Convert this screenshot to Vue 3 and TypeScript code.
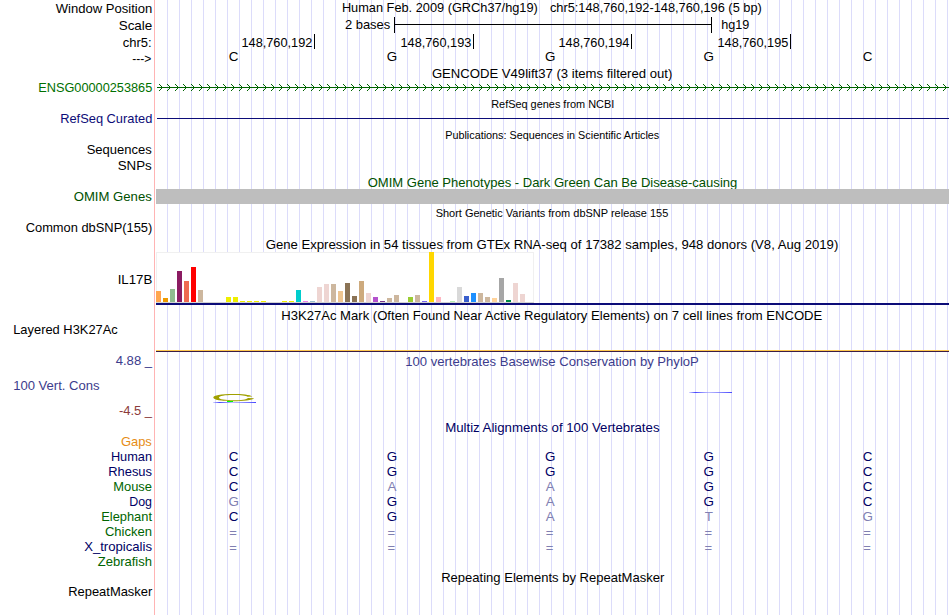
<template>
  <main class="browser">
    <section v-for="row in rows" :key="row.top" class="row">
      <svg class="side" width="154" :height="row.height" :viewBox="`0 ${row.top} 154 ${row.height}`">
        <text
          v-for="l in row.labels"
          :key="l.text"
          :x="l.x"
          :y="l.y"
          :textLength="l.width"
          lengthAdjust="spacingAndGlyphs"
          :class="l.tone"
        >{{ l.text }}</text>
      </svg>

      <svg class="plot" width="794" :height="row.height" :viewBox="`155 ${row.top} 794 ${row.height}`">
        <g v-if="row.kind === 'scale'" class="ink">
          <rect x="394" y="17" width="1" height="16" />
          <rect x="711" y="17" width="1" height="16" />
          <rect x="394" y="24" width="318" height="1" />
        </g>

        <g v-else-if="row.kind === 'ticks'" class="ink">
          <rect v-for="x in ticks" :key="x" :x="x" y="34" width="1" height="15" />
        </g>

        <g v-else-if="row.kind === 'gene'" class="gene">
          <rect x="157" y="87" width="792" height="1" />
          <path v-for="x in arrows" :key="x" :d="`M${x - 3} 84l3.5 3.5l-3.5 3.5`" />
        </g>

        <rect v-else-if="row.kind === 'refseq'" class="navy-fill" x="157" y="118" width="792" height="1" />

        <rect v-else-if="row.kind === 'omim'" class="omim" x="156" y="189" width="793" height="15" />

        <g v-else-if="row.kind === 'gtex'">
          <rect class="gtex-box" x="156.5" y="252.5" width="377" height="50" />
          <rect class="gtex-base" x="156" y="302" width="378" height="1" />
          <template v-for="(b, i) in tissues" :key="i">
            <rect v-if="b[0]" :x="156 + i * 7" :y="302 - b[0]" width="5" :height="b[0]" :fill="b[1]" />
          </template>
          <rect class="navy-fill" x="156" y="303" width="793" height="2" />
        </g>

        <g v-else-if="row.kind === 'h3k27ac'">
          <rect class="mark-top" x="156" y="350" width="793" height="1" />
          <rect class="mark-bottom" x="156" y="351" width="793" height="1" />
        </g>

        <g v-else-if="row.kind === 'conservation'">
          <defs>
            <linearGradient id="fade">
              <stop offset="0" stop-color="#4646ff" stop-opacity="0.2" />
              <stop offset="0.15" stop-color="#4646ff" />
              <stop offset="0.45" stop-color="#8c8cff" stop-opacity="0.6" />
              <stop offset="1" stop-color="#4646ff" />
            </linearGradient>
          </defs>
          <path
            class="logo"
            d="M252.500 396.600C250 394.600 242 394 233 394C221 394 213.300 395.200 213.300 397.600C213.300 400 221 401.200 233 401.200C243 401.200 253 400.300 254 398.200L248 397.900C246.500 399.600 241 400.300 234 400.300C225 400.300 219 399.500 219 397.600C219 395.700 225 394.900 233 394.900C241 394.900 246 395.400 247.500 396.700Z"
          />
          <rect class="logo-green" x="227" y="401" width="6" height="1" />
          <rect x="213" y="402" width="43" height="1" fill="url(#fade)" />
          <rect x="689" y="392" width="43" height="1" fill="url(#fade)" />
        </g>

        <text
          v-for="t in row.titles"
          :key="t.text"
          :x="t.x"
          :y="t.y"
          :textLength="t.width"
          lengthAdjust="spacingAndGlyphs"
          :class="t.tone"
        >{{ t.text }}</text>

        <text
          v-for="(base, i) in row.bases"
          :key="i"
          class="base"
          :class="[baseTone(row, base, i), { gap: base === '=' }]"
          :x="base === '=' ? columns[i] - 0.6 : columns[i]"
          :y="base === '=' ? row.baseY + 1 : row.baseY"
        >{{ base }}</text>
      </svg>
    </section>
  </main>
</template>

<script setup lang="ts">
interface Label {
  text: string
  x: number
  y: number
  width: number
  tone: string
}

interface Row {
  top: number
  height: number
  kind: string
  labels: Label[]
  titles: Label[]
  bases: string
  baseY: number
}

const human = 'CGGGC'
const columns = [233.6, 391.9, 550.2, 708.8, 867.6]
const ticks = [314, 473, 631, 790]
const arrows = Array.from({ length: 99 }, (_, i) => 162 + i * 8)

// left and right are the visible edges of the text
function label(text: string, left: number, right: number, y: number, tone = 'black'): Label {
  return { text, x: left - 0.8, y, width: right - left + 1.1, tone }
}

function row(
  top: number,
  bottom: number,
  labels: Label[],
  titles: Label[] = [],
  kind = '',
  bases = '',
  baseY = 0,
): Row {
  return { top, height: bottom - top, labels, titles, kind, bases, baseY }
}

function species(name: string, left: number, index: number, tone: string, bases = ''): Row {
  const top = 450 + index * 15
  return row(top, top + 15, [label(name, left, 151.7, top + 11, tone)], [], 'species', bases, top + 11)
}

function baseTone(r: Row, base: string, i: number) {
  if (r.kind !== 'species') return 'black'
  return base === human[i] ? 'navy' : 'faded'
}

const rows: Row[] = [
  row(0, 17, [label('Window Position', 56.5, 152, 13)], [
    label('Human Feb. 2009 (GRCh37/hg19)', 342.7, 537.5, 12),
    label('chr5:148,760,192-148,760,196 (5 bp)', 550.7, 761.5, 12),
  ]),
  row(17, 33, [label('Scale', 119.5, 152, 30)], [
    label('2 bases', 345.7, 390, 29),
    label('hg19', 722, 749, 29),
  ], 'scale'),
  row(33, 49, [label('chr5:', 123.5, 151.3, 47)], [
    label('148,760,192', 242.3, 312, 47),
    label('148,760,193', 401.3, 471, 47),
    label('148,760,194', 559.3, 629, 47),
    label('148,760,195', 718.3, 788, 47),
  ], 'ticks'),
  row(49, 66, [label('--->', 133, 151, 63)], [], 'bases', human, 61),
  row(66, 81, [], [label('GENCODE V49lift37 (3 items filtered out)', 432.7, 672, 78)]),
  row(81, 97, [label('ENSG00000253865', 39, 152, 92, 'green')], [], 'gene'),
  row(97, 112, [], [label('RefSeq genes from NCBI', 492, 614, 108, 'small')]),
  row(112, 128, [label('RefSeq Curated', 61, 152, 123, 'navy2')], [], 'refseq'),
  row(128, 143, [], [label('Publications: Sequences in Scientific Articles', 446, 659, 139, 'small')]),
  row(143, 159, [label('Sequences', 87.5, 151.5, 154)]),
  row(159, 175, [label('SNPs', 118.5, 151.5, 170)]),
  row(175, 189, [], [label('OMIM Gene Phenotypes - Dark Green Can Be Disease-causing', 368.5, 737, 187, 'forest')]),
  row(189, 204, [label('OMIM Genes', 74.5, 151.5, 201, 'forest')], [], 'omim'),
  row(204, 220, [], [label('Short Genetic Variants from dbSNP release 155', 436.5, 668, 217, 'small')]),
  row(220, 236, [label('Common dbSNP(155)', 26.5, 152, 232)]),
  row(236, 252, [], [
    label('Gene Expression in 54 tissues from GTEx RNA-seq of 17382 samples, 948 donors (V8, Aug 2019)', 266.5, 838, 249),
  ]),
  row(252, 305, [label('IL17B', 118.5, 152, 284)], [], 'gtex'),
  row(305, 323, [], [
    label('H3K27Ac Mark (Often Found Near Active Regulatory Elements) on 7 cell lines from ENCODE', 282, 822, 320),
  ]),
  row(323, 352, [label('Layered H3K27Ac', 14, 117.5, 334)], [], 'h3k27ac'),
  row(352, 371, [label('4.88 _', 116.5, 151.8, 365, 'indigo')], [
    label('100 vertebrates Basewise Conservation by PhyloP', 406, 698.5, 366, 'indigo'),
  ]),
  row(371, 420, [
    label('100 Vert. Cons', 14, 99.3, 390, 'indigo'),
    label('-4.5 _', 119.7, 151.8, 415, 'maroon'),
  ], [], 'conservation'),
  row(420, 435, [], [label('Multiz Alignments of 100 Vertebrates', 446, 659.2, 432, 'navy')]),
  row(435, 450, [label('Gaps', 121.7, 151.5, 446, 'orange')]),
  species('Human', 111.7, 0, 'navy', 'CGGGC'),
  species('Rhesus', 109, 1, 'navy', 'CGGGC'),
  species('Mouse', 114, 2, 'pine', 'CAAGC'),
  species('Dog', 130, 3, 'navy', 'GGAGC'),
  species('Elephant', 102, 4, 'pine', 'CGATG'),
  species('Chicken', 105.7, 5, 'pine', '====='),
  species('X_tropicalis', 85, 6, 'navy', '====='),
  species('Zebrafish', 98.5, 7, 'pine'),
  row(570, 585, [], [label('Repeating Elements by RepeatMasker', 442, 664, 582)]),
  row(585, 615, [label('RepeatMasker', 69, 152, 596)]),
]

// bar height and colour per GTEx tissue
const tissues: [number, string][] = [
  [11, '#ffa54f'], [4, '#ee9a00'], [13, '#8fbc8f'], [31, '#8b1c62'], [21, '#ee6a50'], [35, '#ff0000'],
  [12, '#cdb79e'], [0, ''], [0, ''], [0, ''], [5, '#eeee00'], [5, '#eeee00'],
  [1, '#eeee00'], [1, '#eeee00'], [1, '#eeee00'], [1, '#eeee00'], [0, ''], [0, ''],
  [1, '#eeee00'], [1, '#eeee00'], [12, '#00cdcd'], [1, '#ee82ee'], [1, '#9ac0cd'], [15, '#eed5d2'],
  [18, '#eed5d2'], [18, '#cdb79e'], [11, '#eec591'], [19, '#8b7355'], [6, '#8b7355'], [21, '#cdaa7d'],
  [9, '#eed5d2'], [5, '#b452cd'], [1, '#7a378b'], [4, '#cdb79e'], [7, '#cdb79e'], [0, ''],
  [5, '#9acd32'], [7, '#cdb79e'], [1, '#7a67ee'], [50, '#ffd700'], [5, '#ffb6c1'], [0, ''],
  [1, '#b4eeb4'], [15, '#d9d9d9'], [6, '#3a5fcd'], [9, '#1e90ff'], [9, '#cdb79e'], [5, '#cdb79e'],
  [4, '#ffd39b'], [24, '#a6a6a6'], [2, '#008b45'], [19, '#eed5d2'], [8, '#eed5d2'], [0, ''],
]
</script>

<style>
body {
  background: #fff;
}
</style>

<style scoped>
.browser {
  width: 950px;
  height: 615px;
  display: flex;
  flex-direction: column;
  overflow: hidden;
  font-family: 'Liberation Sans', Arial, sans-serif;
  font-size: 13.4px;
}

.row {
  display: flex;
  flex: none;
}

.side,
.plot {
  display: block;
  flex: none;
  overflow: visible;
}

.side {
  border-right: 1px solid #ffb4b4;
}

/* guide line every 12px */
.plot {
  background: repeating-linear-gradient(to right, #dcdcfa 0 1px, transparent 1px 12px) 12px 0 no-repeat;
}

.black,
.small,
.ink {
  fill: #000;
}

.small {
  font-size: 11.2px;
}

.base {
  text-anchor: middle;
}

.gap {
  font-size: 13px;
}

.navy {
  fill: #000064;
}

.navy2,
.navy-fill {
  fill: #0c0c78;
}

.faded {
  fill: #8080b2;
}

.green {
  fill: #007000;
}

.forest {
  fill: #005000;
}

.pine {
  fill: #006400;
}

.indigo {
  fill: #3c3c8c;
}

.maroon {
  fill: #8c3c3c;
}

.orange {
  fill: #e68c14;
}

.gene {
  fill: #006400;
}

.gene path {
  fill: none;
  stroke: #006400;
  stroke-width: 1;
}

.omim {
  fill: #bebebe;
}

.gtex-box {
  fill: #fff;
  stroke: #f0f0f0;
}

.gtex-base {
  fill: #d3d3d3;
}

.mark-top {
  fill: #ffc850;
}

.mark-bottom {
  fill: #3c1e46;
}

.logo {
  fill: #a0a000;
}

.logo-green {
  fill: #00ff00;
}
</style>
